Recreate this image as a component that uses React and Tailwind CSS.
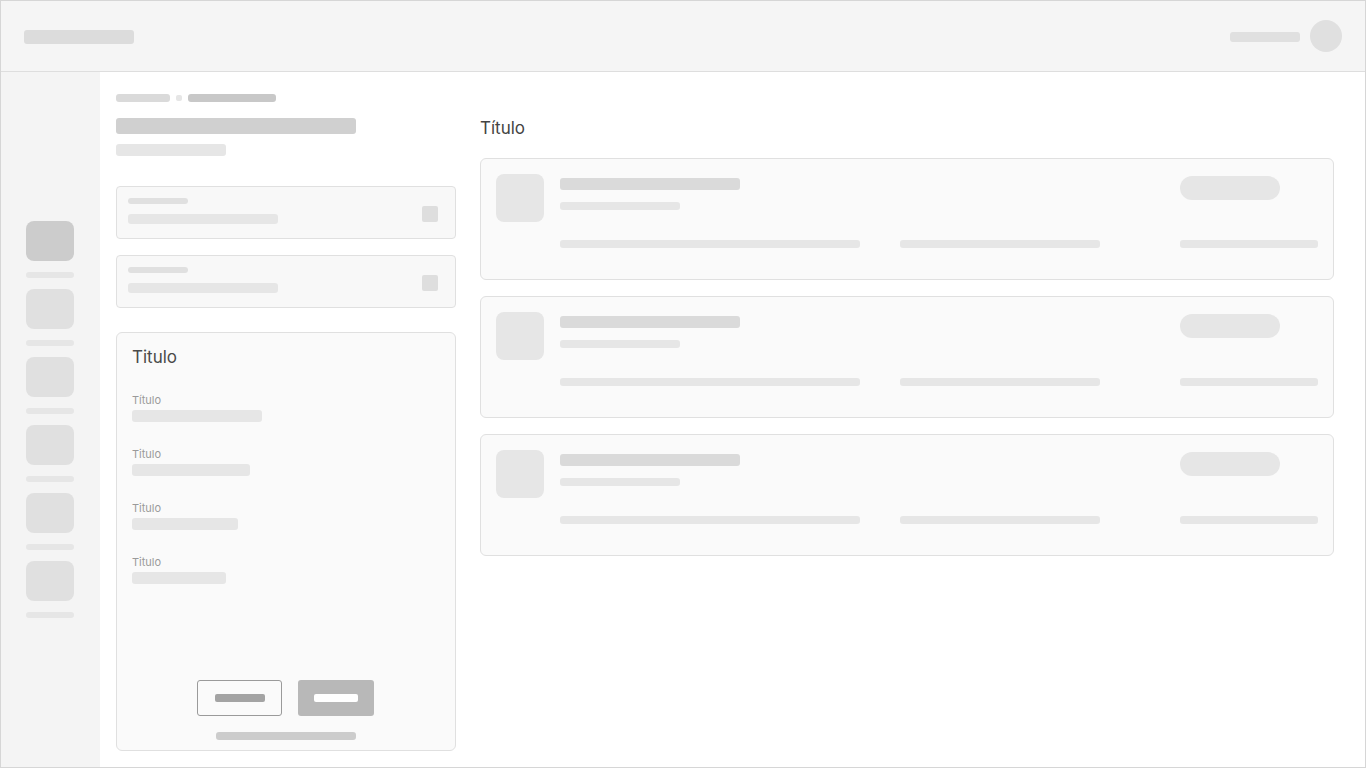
import React from "react";

const navItems = [true, false, false, false, false, false];

const fields = [
  { label: "Título", w: "w-[130px]" },
  { label: "Titulo", w: "w-[118px]" },
  { label: "Titulo", w: "w-[106px]" },
  { label: "Titulo", w: "w-[94px]" },
];

function InputSkeleton({ className = "" }) {
  return (
    <div
      className={`h-[53px] shrink-0 rounded-[4px] border border-[#e0e0e0] bg-[#f8f8f8] pl-[11px] pr-[17px] pt-[11px] flex items-start justify-between ${className}`}
    >
      <div className="flex flex-col">
        <div className="h-[6px] w-[60px] rounded-[3px] bg-[#e0e0e0]" />
        <div className="mt-[10px] h-[10px] w-[150px] rounded-[3px] bg-[#e6e6e6]" />
      </div>
      <div className="mt-[8px] h-4 w-4 rounded-[2px] bg-[#dedede]" />
    </div>
  );
}

function ListCard() {
  return (
    <div className="h-[122px] shrink-0 rounded-md border border-[#e0e0e0] bg-[#fafafa] p-[15px] flex gap-4">
      <div className="h-12 w-12 shrink-0 rounded-lg bg-[#e6e6e6]" />
      <div className="flex-1 grid grid-cols-[300px_1fr_138px] gap-x-10 content-start">
        <div className="col-span-2 flex flex-col">
          <div className="mt-1 h-3 w-[180px] rounded-[3px] bg-[#dadada]" />
          <div className="mt-3 h-2 w-[120px] rounded-[3px] bg-[#e6e6e6]" />
        </div>
        <div className="mt-[2px] h-6 w-[100px] rounded-full bg-[#e6e6e6]" />
        <div className="mt-[30px] h-2 w-[300px] rounded-[3px] bg-[#e6e6e6]" />
        <div className="mt-[30px] h-2 w-[200px] rounded-[3px] bg-[#e6e6e6]" />
        <div className="mt-[30px] h-2 w-[138px] rounded-[3px] bg-[#e6e6e6]" />
      </div>
    </div>
  );
}

export default function App() {
  return (
    <div className="h-screen w-full overflow-hidden border border-[#d6d6d6] bg-white flex flex-col font-['Inter',sans-serif]">
      {/* top bar */}
      <header className="h-[71px] shrink-0 border-b border-[#dedede] bg-[#f5f5f5] pl-[23px] pr-[23px] flex items-center justify-between">
        <div className="mt-[2px] h-[14px] w-[110px] rounded-[3px] bg-[#dcdcdc]" />
        <div className="flex items-center gap-[10px]">
          <div className="mt-[2px] h-[10px] w-[70px] rounded-[3px] bg-[#e0e0e0]" />
          <div className="h-8 w-8 rounded-full bg-[#e0e0e0]" />
        </div>
      </header>

      <div className="flex flex-1 min-h-0">
        {/* side navigation */}
        <aside className="w-[99px] shrink-0 bg-[#f4f4f4] pl-[25px] flex flex-col justify-center items-start">
          {navItems.map((active, i) => (
            <div key={i} className={`flex flex-col ${i > 0 ? "mt-[11px]" : ""}`}>
              <div
                className={`h-10 w-12 rounded-lg ${active ? "bg-[#cccccc]" : "bg-[#e0e0e0]"}`}
              />
              <div className="mt-[11px] h-[6px] w-12 rounded-[3px] bg-[#e6e6e6]" />
            </div>
          ))}
        </aside>

        {/* content */}
        <main className="flex-1 min-w-0 flex gap-6 pl-4 pr-[31px] pt-[22px] pb-4">
          <section className="w-[340px] shrink-0 flex flex-col">
            <div className="flex items-center">
              <div className="h-2 w-[54px] rounded-[3px] bg-[#dadada]" />
              <div className="ml-[6px] h-[6px] w-[6px] rounded-[2px] bg-[#e6e6e6]" />
              <div className="ml-[6px] h-2 w-[88px] rounded-[3px] bg-[#c8c8c8]" />
            </div>
            <div className="mt-4 h-4 w-[240px] rounded-[3px] bg-[#d0d0d0]" />
            <div className="mt-[10px] h-3 w-[110px] rounded-[3px] bg-[#e6e6e6]" />

            <InputSkeleton className="mt-[30px]" />
            <InputSkeleton className="mt-4" />

            <div className="mt-6 flex-1 min-h-0 rounded-md border border-[#e0e0e0] bg-[#fafafa] px-[15px] pt-[12px] pb-[10px] flex flex-col">
              <h2 className="text-[17px] leading-6 font-normal text-[#4a4a4a]">Titulo</h2>
              {fields.map((f, i) => (
                <div key={i} className={`${i === 0 ? "mt-[24px]" : "mt-[25px]"} flex flex-col`}>
                  <span className="text-[11px] leading-[14px] text-[#9a9a9a]">{f.label}</span>
                  <div className={`mt-[3px] h-3 ${f.w} rounded-[3px] bg-[#e6e6e6]`} />
                </div>
              ))}
              <div className="flex-1" />
              <div className="flex justify-center gap-4 pr-[1px]">
                <div className="h-9 w-[85px] rounded-[3px] border border-[#9a9a9a] flex items-center justify-center">
                  <div className="h-2 w-[50px] rounded-[2px] bg-[#a3a3a3]" />
                </div>
                <div className="h-9 w-[76px] rounded-[3px] bg-[#b8b8b8] flex items-center justify-center">
                  <div className="h-2 w-[44px] rounded-[2px] bg-white" />
                </div>
              </div>
              <div className="mt-4 mx-auto h-2 w-[140px] rounded-[3px] bg-[#cccccc]" />
            </div>
          </section>

          <section className="flex-1 min-w-0 flex flex-col">
            <h1 className="mt-[22px] text-[17px] leading-6 font-normal text-[#444444]">Título</h1>
            <div className="mt-[18px] flex flex-col gap-4">
              <ListCard />
              <ListCard />
              <ListCard />
            </div>
          </section>
        </main>
      </div>
    </div>
  );
}
